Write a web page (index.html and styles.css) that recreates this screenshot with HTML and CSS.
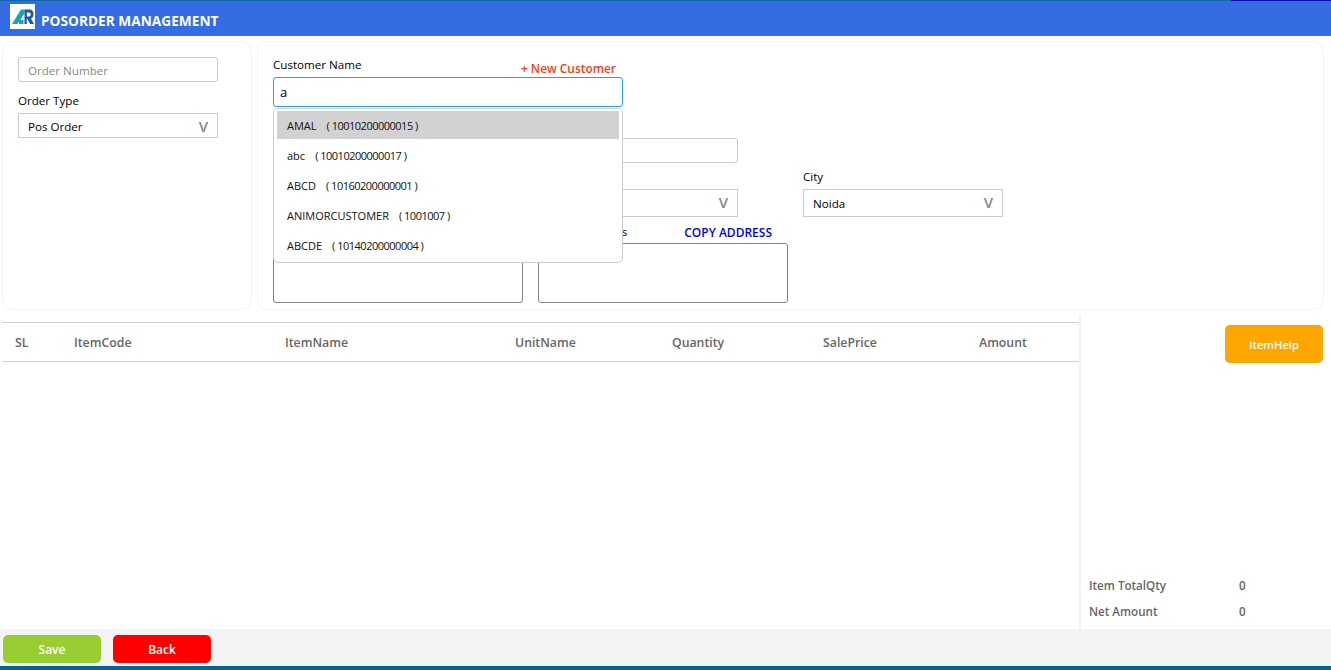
FILE: index.html
```html
<!DOCTYPE html>
<html lang="en">
<head>
<meta charset="utf-8">
<title>POSORDER MANAGEMENT</title>
<link rel="stylesheet" href="styles.css">
</head>
<body>
<div class="page">
  <div class="topline"><div class="topline-end"></div></div>
  <header class="header">
    <div class="logo">
      <svg width="25" height="25" viewBox="0 0 25 25">
        <path d="M2 20 L11 5.5 H14.5 V9.5 L7.5 20 Z" fill="#1aa6b0"/>
        <path d="M9 16 H13.5 V20 H9 Z" fill="#1aa6b0"/>
        <path d="M14.5 5.5 H19.5 Q23.5 5.5 23.5 10 Q23.5 13.5 21 14.5 L24 20 H20 L17.5 15 H16.8 V20 H14.5 Z M16.8 8.5 V12.5 H19 Q20.7 12.5 20.7 10.5 Q20.7 8.5 19 8.5 Z" fill="#1f5c9e" fill-rule="evenodd"/>
      </svg>
    </div>
    <h1 class="title">POSORDER MANAGEMENT</h1>
  </header>

  <section class="top">
    <div class="card card-left">
      <input class="input input-order" placeholder="Order Number">
      <label class="label label-type">Order Type</label>
      <div class="select select-type"><span>Pos Order</span><span class="chev">V</span></div>
    </div>
    <div class="card card-right">
      <div class="row row-customer">
        <div class="customer">
          <div class="customer-head">
            <label class="label">Customer Name</label>
            <a class="new-customer">+ New Customer</a>
          </div>
          <div class="input-active">a</div>
          <ul class="dropdown">
            <li class="option selected"><span>AMAL</span><span class="code">( 10010200000015 )</span></li>
            <li class="option"><span>abc</span><span class="code">( 10010200000017 )</span></li>
            <li class="option"><span>ABCD</span><span class="code">( 10160200000001 )</span></li>
            <li class="option"><span>ANIMORCUSTOMER</span><span class="code">( 1001007 )</span></li>
            <li class="option"><span>ABCDE</span><span class="code">( 10140200000004 )</span></li>
          </ul>
        </div>
      </div>
      <div class="row row-contact">
        <div class="field w250"><div class="label-gap"></div><div class="input-box"></div></div>
        <div class="field w200"><div class="label-gap"></div><div class="input-box"></div></div>
      </div>
      <div class="row row-region">
        <div class="field w250"><div class="label-gap label-gap-region"></div><div class="select"><span></span><span class="chev">V</span></div></div>
        <div class="field w200"><div class="label-gap label-gap-region"></div><div class="select"><span></span><span class="chev">V</span></div></div>
        <div class="field w200 city"><label class="label">City</label><div class="select"><span>Noida</span><span class="chev">V</span></div></div>
      </div>
      <div class="row row-address">
        <div class="field w250"><div class="addr-gap"></div><div class="area"></div></div>
        <div class="field w250">
          <div class="addr-head"><label class="label label-ship">Shipping Address</label><a class="copy">COPY ADDRESS</a></div>
          <div class="area"></div>
        </div>
      </div>
    </div>
  </section>

  <section class="middle">
    <div class="table-wrap">
      <div class="thead">
        <span>SL</span><span>ItemCode</span><span>ItemName</span><span>UnitName</span><span>Quantity</span><span>SalePrice</span><span>Amount</span>
      </div>
    </div>
    <aside class="side">
      <div class="side-top"><button class="btn btn-help">ItemHelp</button></div>
      <div class="totals">
        <div class="total"><span class="total-label">Item TotalQty</span><span>0</span></div>
        <div class="total"><span class="total-label">Net Amount</span><span>0</span></div>
      </div>
    </aside>
  </section>

  <footer class="footer">
    <button class="btn btn-save">Save</button>
    <button class="btn btn-back">Back</button>
  </footer>
  <div class="bottombar"></div>
</div>
</body>
</html>
```
FILE: styles.css
```css
* { box-sizing: border-box; }
html, body { margin: 0; padding: 0; }
body { background: #fff; font-family: "Open Sans", "Noto Sans", sans-serif; color: #000; overflow: hidden; }
.page { width: 1331px; height: 670px; display: flex; flex-direction: column; }
.topline { height: 1px; background: #0f6a9e; flex: none; display: flex; justify-content: flex-end; }
.topline-end { width: 100px; background: #0a0aa8; }
.header { height: 35px; flex: none; background: #336ce3; display: flex; align-items: center; padding-left: 10px; }
.logo { width: 25px; height: 25px; background: #fff; display: flex; margin-top: -5px; }
.title { margin: 4px 0 0 6px; font-size: 13.7px; font-weight: 700; color: #fff; line-height: 18px; }

.top { display: flex; gap: 5px; padding: 5px 7px 0 2px; height: 279px; flex: none; }
.card { border: 1px solid #f3f3f3; border-radius: 10px; height: 269px; background: #fff; }
.card-left { width: 250px; padding: 15px 15px 0; flex: none; }
.card-right { flex: 1; padding: 0 15px; }

.label { display: block; font-size: 11.6px; line-height: 16px; color: #000; }
.input { display: block; width: 200px; height: 25px; border: 1px solid #ccc; border-radius: 3px; padding: 2px 9px 0; font: 11.6px "Open Sans", sans-serif; outline: none; }
.input::placeholder { color: #888; opacity: 1; }
.label-type { margin-top: 11px; }
.select { height: 25px; border: 1px solid #ccc; padding: 2px 9px 0; font-size: 11.6px; display: flex; align-items: center; justify-content: space-between; }
.select-type { width: 200px; margin-top: 4px; }
.chev { color: #888; font-size: 15px; font-weight: 600; line-height: 1; margin-top: -1px; }

.row { display: flex; gap: 15px; }
.row-customer { padding-top: 15px; height: 77px; }
.customer { width: 350px; position: relative; height: 50px; }
.customer-head { display: flex; justify-content: space-between; align-items: flex-start; height: 20px; padding-right: 7px; }
.new-customer { color: #ff3a0f; font-size: 11.9px; font-weight: 600; line-height: 16px; margin-top: 3px; }
.input-active { height: 30px; border: 1px solid #1ea7d8; border-radius: 3px; padding: 1px 6px 0; font-size: 13px; line-height: 27px; }
.dropdown { position: absolute; top: 51px; left: 0; width: 350px; height: 155px; margin: 0; padding: 2px 3px; list-style: none; background: #fff; border: 1px solid #ccc; border-radius: 5px; z-index: 5; }
.option { height: 30px; padding: 0 10px 1px; display: flex; gap: 10px; align-items: center; font-size: 11px; color: #111; }
.option.selected { height: 28px; margin-bottom: 2px; background: #d2d2d2; padding-bottom: 0; }
.code { letter-spacing: -0.5px; }

.field { flex: none; }
.w250 { width: 250px; }
.w200 { width: 200px; }
.city { margin-left: 50px; }
.row-contact { height: 50px; padding-top: 4px; }
.label-gap { height: 15px; }
.input-box { height: 25px; border: 1px solid #ccc; border-radius: 3px; }
.row-region { height: 48px; }
.label-gap-region { height: 16px; margin-bottom: 4px; }
.row-region .label { margin-bottom: 4px; }
.row-region .select { height: 28px; padding-top: 0; }
.row-address { margin-top: 8px; }
.addr-gap { height: 18px; }
.addr-head { display: flex; justify-content: space-between; align-items: center; height: 18px; }
.label-ship { letter-spacing: -0.3px; margin-top: -5px; }
.copy { color: #0000ee; font-size: 12px; font-weight: 600; line-height: 16px; padding-right: 16px; margin-top: -2px; }
.area { height: 60px; border: 1px solid #808080; border-radius: 3px; }

.middle { flex: 1; display: flex; min-height: 0; padding-left: 2px; }
.table-wrap { width: 1077px; padding-top: 7px; flex: none; }
.thead { height: 40px; border-top: 1px solid #d2d2d2; border-bottom: 1px solid #d2d2d2; display: grid; grid-template-columns: 59px 211px 230px 157px 151px 156px 1fr; padding-left: 13px; align-items: center; font-size: 12.3px; font-weight: 600; color: #666; }
.side { flex: 1; border-left: 2px solid #f3f3f3; display: flex; flex-direction: column; justify-content: space-between; }
.side-top { display: flex; justify-content: flex-end; padding: 10px 8px 0 0; }
.btn { border: 0; border-radius: 5px; color: #fff; font: 600 12px "Open Sans", sans-serif; padding: 0; }
.btn-help { width: 98px; height: 38px; background: #ffa500; font-size: 11.2px; }
.totals { padding: 0 0 4px 8px; }
.total { display: grid; grid-template-columns: 150px 1fr; font-size: 11.6px; font-weight: 600; color: #666; height: 26px; line-height: 26px; }

.footer { height: 37px; flex: none; background: #f3f3f3; display: flex; gap: 12px; padding: 6px 0 0 3px; }
.btn-save { width: 98px; height: 28px; background: #9acd32; }
.btn-back { width: 98px; height: 28px; background: #ff0000; }
.bottombar { height: 4px; flex: none; background: #006699; }
```
